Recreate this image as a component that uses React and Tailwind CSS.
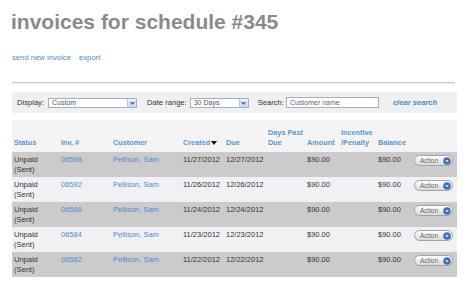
/**
 * Invoices for schedule — listing page
 */
const cols = 'grid grid-cols-[47px_52px_70px_43px_42px_39px_34px_37px_36px_45px]';

const invoices = [
    { id: '06598', created: '11/27/2012', due: '12/27/2012' },
    { id: '06592', created: '11/26/2012', due: '12/26/2012' },
    { id: '06586', created: '11/24/2012', due: '12/24/2012' },
    { id: '06584', created: '11/23/2012', due: '12/23/2012' },
    { id: '06582', created: '11/22/2012', due: '12/22/2012' },
];

const SelectBox = ({ value, className }) => (
    <div className={`flex items-center h-[10px] bg-white border border-[#9fb1c9] ${className}`}>
        <span className="flex-1 pl-[3px] text-[7px] leading-[8px] text-[#555]">{value}</span>
        <span className="w-[9px] h-full flex items-center justify-center bg-gradient-to-b from-[#eef3fb] to-[#c9d7ec] border-l border-[#b9c8de]">
            <svg width="5" height="4" viewBox="0 0 5 4">
                <path d="M0.5 0.8 L2.5 3 L4.5 0.8" fill="none" stroke="#3b66a8" strokeWidth="1.2" />
            </svg>
        </span>
    </div>
);

const ActionButton = () => (
    <div className="mt-[0.5px] ml-[2px] w-[39px] h-[11px] rounded-full border border-[#a3a3a3] bg-gradient-to-b from-white to-[#d9d9d9] flex items-center justify-between pl-[5px] pr-[1px]">
        <span className="text-[6.5px] leading-[8px] text-[#666]">Action</span>
        <svg width="8" height="8" viewBox="0 0 8 8">
            <circle cx="4" cy="4" r="3.8" fill="#3f70ba" />
            <path d="M2.3 3.2 L5.7 3.2 L4 5.2 Z" fill="#fff" />
        </svg>
    </div>
);

const App = () => {
    return (
        <div className="w-[471px] h-[283px] overflow-hidden bg-white font-['Liberation_Sans',Arial,sans-serif]">
            {/* Title */}
            <h1 className="pl-[11px] pt-[10px] text-[21px] leading-[24px] font-bold text-[#8a8a8a]">
                invoices for schedule #345
            </h1>

            {/* Links */}
            <div className="flex gap-[8px] pl-[12px] mt-[19px] text-[7.7px] leading-[10px] text-[#4a8cc8]">
                <a>send new invoice</a>
                <a>export</a>
            </div>

            {/* Separator */}
            <div className="ml-[12px] mt-[19px] w-[443px] h-[2px] border-t border-[#cbcbcb] border-b border-b-[#ededed]" />

            {/* Filter bar */}
            <div className="ml-[12px] mt-[8px] w-[445px] h-[21px] bg-[#f0f0f0] flex items-center pl-[5px] text-[7.6px] leading-[10px] text-[#333]">
                <span>Display:</span>
                <SelectBox value="Custom" className="ml-[4px] w-[89px]" />
                <span className="ml-[10px]">Date range:</span>
                <SelectBox value="30 Days" className="ml-[3px] w-[59px]" />
                <span className="ml-[9px]">Search:</span>
                <div className="ml-[2px] w-[93px] h-[11px] bg-white border border-[#9fb1c9] pl-[3px] text-[7px] leading-[9px] text-[#666]">
                    Customer name
                </div>
                <span className="ml-[14px] font-bold italic text-[#4a8cc8]">clear search</span>
            </div>

            {/* Table */}
            <div className="ml-[12px] mt-[7px] w-[445px]">
                <div className={`${cols} h-[32px] bg-[#f4f4f4] items-end pb-[4.5px] text-[7.3px] leading-[10px] font-bold text-[#5a96cf]`}>
                    <div className="pl-[2px]">Status</div>
                    <div className="pl-[2px]">Inv. #</div>
                    <div className="pl-[2px]">Customer</div>
                    <div className="pl-[2px] flex items-center gap-[1px]">
                        Created
                        <svg width="6" height="4" viewBox="0 0 6 4">
                            <path d="M0 0 L6 0 L3 4 Z" fill="#111" />
                        </svg>
                    </div>
                    <div className="pl-[2px]">Due</div>
                    <div className="pl-[2px]">Days Past<br />Due</div>
                    <div className="pl-[2px]">Amount</div>
                    <div className="pl-[2px]">Incentive<br />/Penalty</div>
                    <div className="pl-[2px]">Balance</div>
                    <div />
                </div>

                {invoices.map((inv, i) => (
                    <div
                        key={inv.id}
                        className={`${cols} h-[25px] items-start pt-[2.5px] text-[7.5px] leading-[10px] text-[#333] ${i % 2 === 0 ? 'bg-[#cbcbcb]' : 'bg-[#f1f1f5]'}`}
                    >
                        <div className="pl-[2px]">Unpaid<br />(Sent)</div>
                        <div className="pl-[2px] text-[#4f8ccb]">{inv.id}</div>
                        <div className="pl-[2px] text-[#4f8ccb]">Pellison, Sam</div>
                        <div className="pl-[2px]">{inv.created}</div>
                        <div className="pl-[2px]">{inv.due}</div>
                        <div />
                        <div className="pl-[2px]">$90.00</div>
                        <div />
                        <div className="pl-[2px]">$90.00</div>
                        <ActionButton />
                    </div>
                ))}
            </div>
        </div>
    );
};

export default App;
